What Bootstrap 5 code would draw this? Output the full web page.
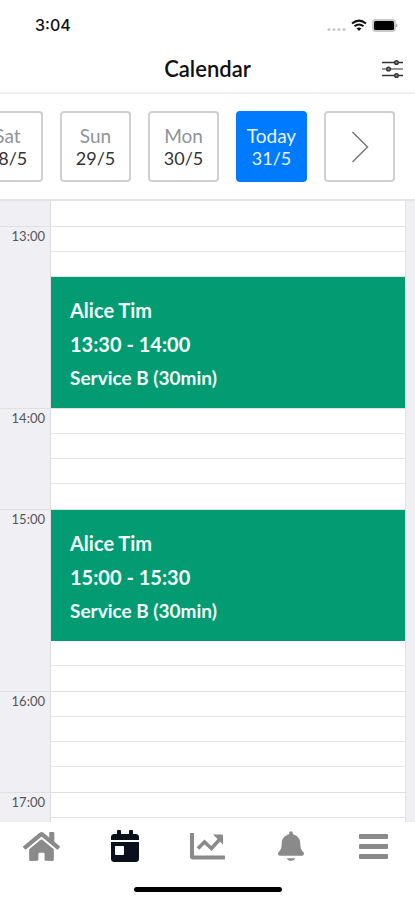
<!DOCTYPE html>
<html lang="en">
<head>
<meta charset="utf-8">
<meta name="viewport" content="width=device-width, initial-scale=1">
<title>Calendar</title>
<link href="https://cdn.jsdelivr.net/npm/bootstrap@5.3.0/dist/css/bootstrap.min.css" rel="stylesheet">
<style>
  body { font-family: Lato, "Liberation Sans", sans-serif; color: #111; background: #fff; }
  svg { display: block; }
  .status-bar { height: 50px; padding: 0 17px 0 35px; }
  .clock { font: 500 16px/20px Inter, sans-serif; }
  .app-header { height: 44px; border-bottom: 2px solid #f0f0f0; display: grid; grid-template-columns: 1fr auto 1fr; padding: 0 12px 4px; }
  .app-title { font-size: 22px; line-height: 24px; font-weight: 600; }
  .day-strip { gap: 18px; padding: 17px 21px; border-bottom: 2px solid #e4e4e6; }
  .day-btn { width: 71px; height: 71px; margin-right: -1px; border: 2px solid #d0d0d2; border-radius: 4px; background: #fff; color: #333; font-size: 18px; line-height: 23px; padding: 0; }
  .day-name { color: #909498; font-size: 19px; }
  .day-btn.is-today { background: #007aff; border-color: #007aff; color: #e8f3ff; }
  .is-today .day-name { color: inherit; }
  .schedule { background: #efeff4; padding-right: 9px; min-height: 0; }
  .hour-row { border-top: 1px solid #e0e0e3; }
  .hour-row:first-child { border-top: 0; }
  .hour-label { width: 50px; padding: 1px 5px 0 0; font-size: 13px; line-height: 16px; color: #55555a; text-align: right; }
  .slots { background: #fff; border-left: 1px solid #dcdcdf; border-right: 1px solid #e2e2e5; }
  .slot { height: 25px; border-bottom: 1px solid #e4e4e6; }
  .slot:last-child { border-bottom: 0; }
  .booking { height: 131px; padding: 16px 19px 0; background: #039b71; color: #f2fffa; font-size: 20px; line-height: 34px; font-weight: 700; }
  .booking-service { font-size: 19px; }
  .tab-bar { height: 48px; }
  .tab-link { height: 48px; color: #8a8a8a; }
  .tab-link.active { color: #0a111c; }
  .home-bar { width: 148px; height: 5px; border-radius: 3px; background: #000; margin: 17px auto 8px; }
</style>
<script src="https://cdn.jsdelivr.net/npm/bootstrap@5.3.0/dist/js/bootstrap.bundle.min.js"></script>
</head>
<body class="vh-100 d-flex flex-column overflow-hidden">
  <div class="status-bar d-flex align-items-center justify-content-between flex-shrink-0">
    <span class="clock">3:04</span>
    <svg width="72" height="16" viewBox="0 0 72 16" aria-hidden="true">
      <g fill="#c8c8c8"><circle cx="3" cy="12.500" r="1.500"/><circle cx="8" cy="12.500" r="1.500"/><circle cx="13" cy="12.500" r="1.500"/><circle cx="18" cy="12.500" r="1.500"/></g>
      <g fill="none" stroke="#111" stroke-width="2"><path d="M26 6.500Q33 .7 40 6.500M28.500 9.300q4.500-3.600 9 0"/></g>
      <path d="M30.500 11.300q2.500-1.800 5 0L33 14z" fill="#111"/>
      <rect x="46" y="2" width="24" height="13" rx="4" fill="#c9c9c9"/><rect x="48" y="4" width="20" height="9" rx="1.500"/><path d="M70 6.500q3 2 0 4z" fill="#aaa"/>
    </svg>
  </div>

  <header class="app-header align-items-center flex-shrink-0">
    <span></span>
    <h1 class="app-title m-0">Calendar</h1>
    <button type="button" class="btn p-0 border-0 ms-auto" aria-label="Filters">
      <svg width="21" height="20" viewBox="0 0 21 20" fill="none" stroke="#333" stroke-width="1.500">
        <path d="M0 3.500h12M17 3.500h4M0 16.500h12M17 16.500h4"/><path d="M0 10h4M9 10h12" stroke="#777"/>
        <g fill="#999"><circle cx="14.500" cy="3.500" r="1.800"/><circle cx="6.500" cy="10" r="1.800"/><circle cx="14.500" cy="16.500" r="1.800"/></g>
      </svg>
    </button>
  </header>

  <nav class="day-strip d-flex justify-content-end overflow-hidden flex-shrink-0" aria-label="Days">
    <button type="button" class="day-btn flex-shrink-0"><span class="day-name d-block">Sat</span>28/5</button>
    <button type="button" class="day-btn flex-shrink-0"><span class="day-name d-block">Sun</span>29/5</button>
    <button type="button" class="day-btn flex-shrink-0"><span class="day-name d-block">Mon</span>30/5</button>
    <button type="button" class="day-btn is-today flex-shrink-0"><span class="day-name d-block">Today</span>31/5</button>
    <button type="button" class="day-btn flex-shrink-0" aria-label="Next days">
      <svg class="mx-auto" width="18" height="32" viewBox="0 0 18 32" fill="none" stroke="#777" stroke-width="1.500"><path d="M1.500 1 16.500 16 1.500 31"/></svg>
    </button>
  </nav>

  <main class="schedule flex-grow-1 overflow-hidden">
    <section class="hour-row d-flex"><div class="hour-label"></div><div class="slots flex-grow-1"><div class="slot"></div></div></section>
    <section class="hour-row d-flex">
      <div class="hour-label">13:00</div>
      <div class="slots flex-grow-1"><div class="slot"></div><div class="slot"></div>
        <article class="booking"><div>Alice Tim</div><div>13:30 - 14:00</div><div class="booking-service">Service B (30min)</div></article></div>
    </section>
    <section class="hour-row d-flex">
      <div class="hour-label">14:00</div>
      <div class="slots flex-grow-1"><div class="slot"></div><div class="slot"></div><div class="slot"></div><div class="slot"></div></div>
    </section>
    <section class="hour-row d-flex">
      <div class="hour-label">15:00</div>
      <div class="slots flex-grow-1">
        <article class="booking"><div>Alice Tim</div><div>15:00 - 15:30</div><div class="booking-service">Service B (30min)</div></article>
        <div class="slot"></div><div class="slot"></div></div>
    </section>
    <section class="hour-row d-flex">
      <div class="hour-label">16:00</div>
      <div class="slots flex-grow-1"><div class="slot"></div><div class="slot"></div><div class="slot"></div><div class="slot"></div></div>
    </section>
    <section class="hour-row d-flex">
      <div class="hour-label">17:00</div>
      <div class="slots flex-grow-1"><div class="slot"></div><div class="slot"></div></div>
    </section>
  </main>

  <footer class="flex-shrink-0 bg-white">
    <nav class="tab-bar row row-cols-5 g-0" aria-label="Main">
      <a href="#home" class="tab-link col d-flex align-items-center justify-content-center" aria-label="Home">
        <svg width="37" height="33" viewBox="0 0 576 512" fill="currentColor"><path d="M280.370 148.260L96 300.110V464a16 16 0 0 0 16 16l112.060-.29a16 16 0 0 0 15.920-16V368a16 16 0 0 1 16-16h64a16 16 0 0 1 16 16v95.640a16 16 0 0 0 16 16.050L464 480a16 16 0 0 0 16-16V300L295.670 148.260a12.190 12.190 0 0 0-15.300 0zM571.600 251.470L488 182.560V44.050a12 12 0 0 0-12-12h-56a12 12 0 0 0-12 12v72.610L318.470 43a48 48 0 0 0-61 0L4.340 251.470a12 12 0 0 0-1.600 16.900l25.500 31A12 12 0 0 0 45.150 301l235.220-193.740a12.190 12.190 0 0 1 15.300 0L530.900 301a12 12 0 0 0 16.900-1.600l25.500-31a12 12 0 0 0-1.700-16.930z"/></svg>
      </a>
      <a href="#calendar" class="tab-link active col d-flex align-items-center justify-content-center" aria-label="Calendar" aria-current="page">
        <svg width="28" height="32" viewBox="0 0 448 512" fill="currentColor"><path d="M0 464c0 26.500 21.500 48 48 48h352c26.500 0 48-21.500 48-48V192H0v272zm64-192c0-8.800 7.200-16 16-16h112c8.800 0 16 7.200 16 16v112c0 8.800-7.200 16-16 16H80c-8.800 0-16-7.200-16-16v-112zM400 64h-48V16c0-8.800-7.200-16-16-16h-32c-8.800 0-16 7.200-16 16v48H160V16c0-8.800-7.200-16-16-16h-32c-8.800 0-16 7.200-16 16v48H48C21.500 64 0 85.500 0 112v48h448v-48c0-26.500-21.500-48-48-48z"/></svg>
      </a>
      <a href="#reports" class="tab-link col d-flex align-items-center justify-content-center" aria-label="Reports">
        <svg width="35" height="27" viewBox="0 0 35 27" fill="none" stroke="currentColor" stroke-width="4"><path d="M2 1v22.500q0 1 1 1h31" stroke-linecap="round"/><path d="m8 15.500 6.500-6.500 7 6.500L30 6" stroke-width="3.500"/><path d="M23 1.500h9q1 0 1 1v9z" fill="currentColor" stroke="none"/></svg>
      </a>
      <a href="#alerts" class="tab-link col d-flex align-items-center justify-content-center" aria-label="Notifications">
        <svg width="26" height="30" viewBox="0 0 448 512" fill="currentColor"><path d="M224 512c35.320 0 63.970-20 72-45H152c8 25 36.650 45 72 45zm215.390-149.710c-19.320-20.760-55.470-51.990-55.470-154.290 0-77.700-54.480-139.900-127.940-155.160V32c0-17.670-14.320-32-31.980-32s-31.980 14.330-31.980 32v20.840C118.560 68.100 64.080 130.300 64.080 208c0 102.300-36.150 133.530-55.470 154.290-6 6.450-8.660 14.160-8.610 21.710.11 16.400 12.980 40 32.100 40h383.800c19.120 0 32-23.600 32.100-40 .05-7.550-2.610-15.270-8.610-21.710z"/></svg>
      </a>
      <a href="#menu" class="tab-link col d-flex align-items-center justify-content-center" aria-label="Menu">
        <svg width="29" height="25" viewBox="0 0 29 25" fill="currentColor"><rect width="29" height="5" rx="1"/><rect y="10" width="29" height="5" rx="1"/><rect y="20" width="29" height="5" rx="1"/></svg>
      </a>
    </nav>
    <div class="home-bar"></div>
  </footer>
</body>
</html>
